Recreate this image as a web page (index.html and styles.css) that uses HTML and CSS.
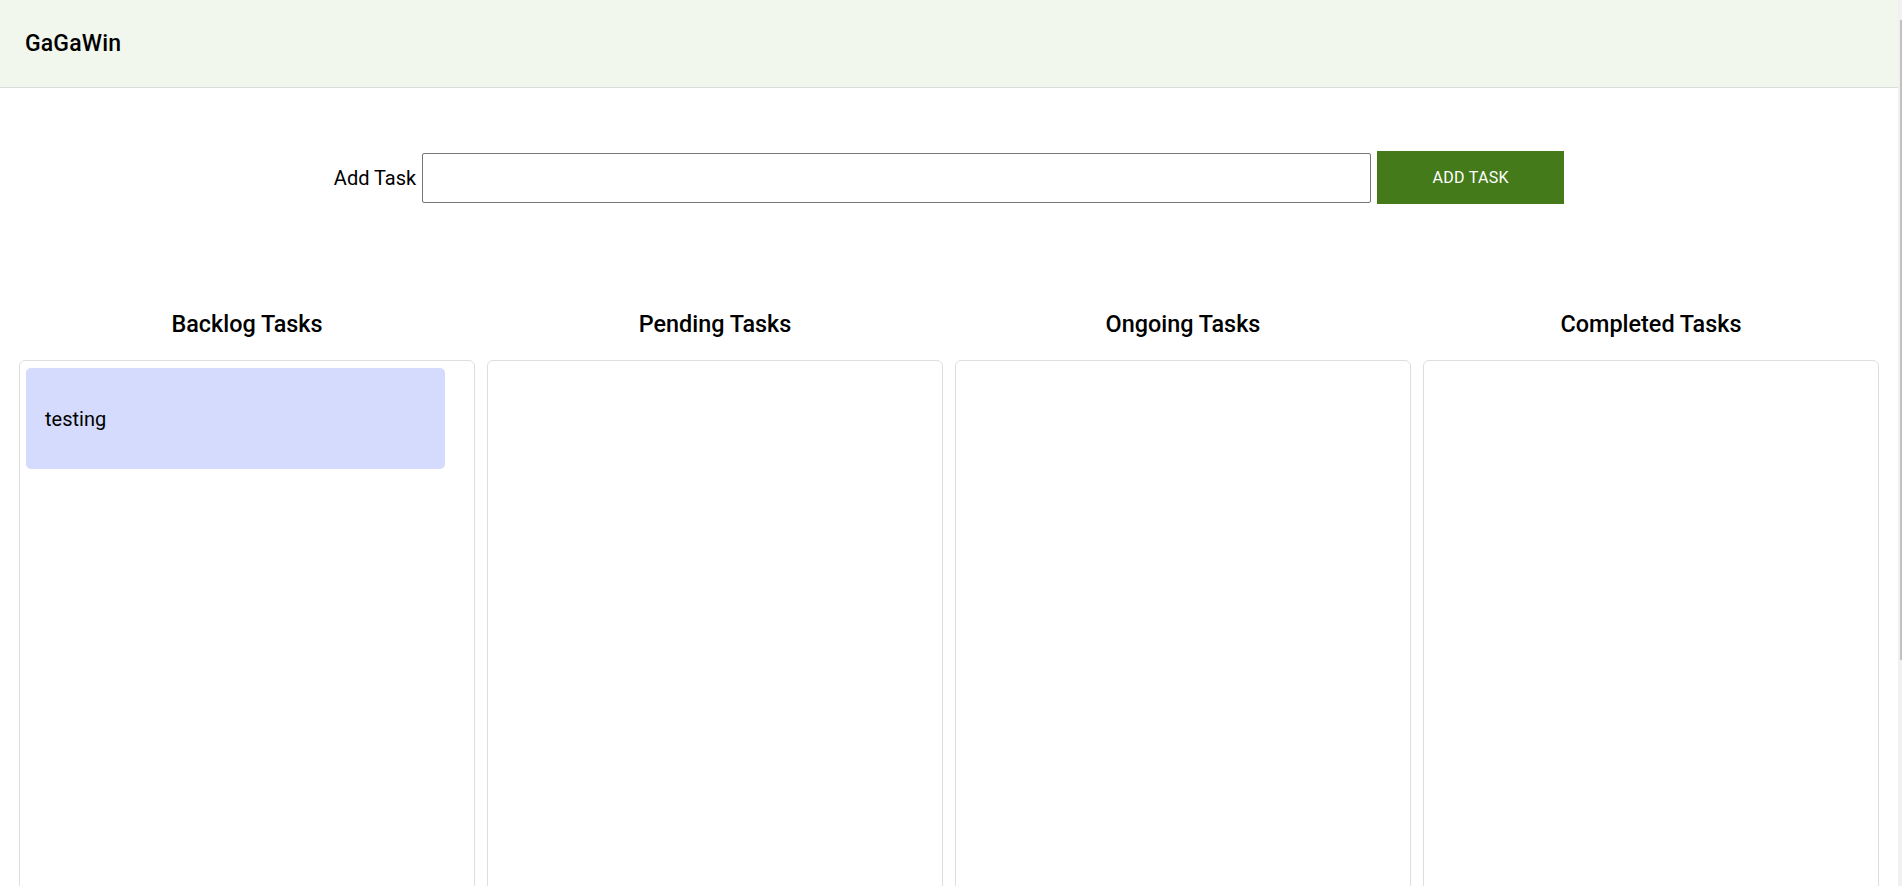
FILE: index.html
```html
<!DOCTYPE html>
<html lang="en">
<head>
<meta charset="utf-8">
<title>GaGaWin</title>
<link rel="stylesheet" href="styles.css">
</head>
<body>
<header class="appbar">
  <div class="brand">GaGaWin</div>
</header>
<main>
  <form class="add-form">
    <label class="add-label" for="task">Add Task</label>
    <input class="add-input" id="task" type="text">
    <button class="add-btn" type="button">Add Task</button>
  </form>
  <section class="board">
    <div class="column">
      <h2 class="col-title">Backlog Tasks</h2>
      <div class="col-box">
        <div class="card">testing</div>
      </div>
    </div>
    <div class="column">
      <h2 class="col-title">Pending Tasks</h2>
      <div class="col-box"></div>
    </div>
    <div class="column">
      <h2 class="col-title">Ongoing Tasks</h2>
      <div class="col-box"></div>
    </div>
    <div class="column">
      <h2 class="col-title">Completed Tasks</h2>
      <div class="col-box"></div>
    </div>
  </section>
</main>
<div class="scrollbar" aria-hidden="true"><div class="scroll-thumb"></div></div>
</body>
</html>
```
FILE: styles.css
```css
body {
  margin: 0 4px 0 0;
  font-family: Roboto, "Liberation Sans", Arial, sans-serif;
  color: #000;
  background: #fff;
}
.scrollbar {
  position: fixed;
  top: 0;
  right: 0;
  bottom: 0;
  width: 4px;
  background: #f1f1f1;
}
.scroll-thumb {
  position: absolute;
  top: 20px;
  left: 2px;
  right: 0;
  height: 640px;
  background: #c1c1c1;
}
.appbar {
  height: 87px;
  background: #f1f7ed;
  border-bottom: 1px solid #dcdcdc;
  display: flex;
  align-items: center;
  padding-left: 25px;
}
.brand {
  font-size: 23px;
  font-weight: 500;
  letter-spacing: 0.15px;
}
.add-form {
  display: flex;
  justify-content: center;
  align-items: center;
  margin-top: 63px;
  gap: 6px;
}
.add-label {
  font-size: 20px;
}
.add-input {
  box-sizing: border-box;
  width: 949px;
  height: 50px;
  border: 1px solid #767676;
  border-radius: 2px;
  font-size: 18px;
  margin: 0;
  padding: 0 6px;
}
.add-btn {
  box-sizing: border-box;
  width: 187px;
  height: 53px;
  background: #447a1a;
  color: #fff;
  border: none;
  border-radius: 0;
  font-family: inherit;
  font-size: 16px;
  font-weight: 400;
  text-transform: uppercase;
  letter-spacing: 0.3px;
  margin: 0;
}
.board {
  display: grid;
  grid-template-columns: repeat(4, 1fr);
  gap: 12px;
  padding: 0 19px;
  margin-top: 105px;
  padding-bottom: 40px;
}
.column {
  display: flex;
  flex-direction: column;
}
.col-title {
  margin: 0;
  text-align: center;
  font-size: 23.4px;
  font-weight: 500;
  line-height: 30px;
  height: 51px;
}
.col-box {
  border: 1px solid #dedede;
  border-radius: 6px;
  height: 620px;
  padding: 7px 6px;
}
.card {
  width: 419px;
  height: 101px;
  box-sizing: border-box;
  background: #d4dbfd;
  border-radius: 5px;
  display: flex;
  align-items: center;
  padding-left: 19px;
  font-size: 20px;
}
```
